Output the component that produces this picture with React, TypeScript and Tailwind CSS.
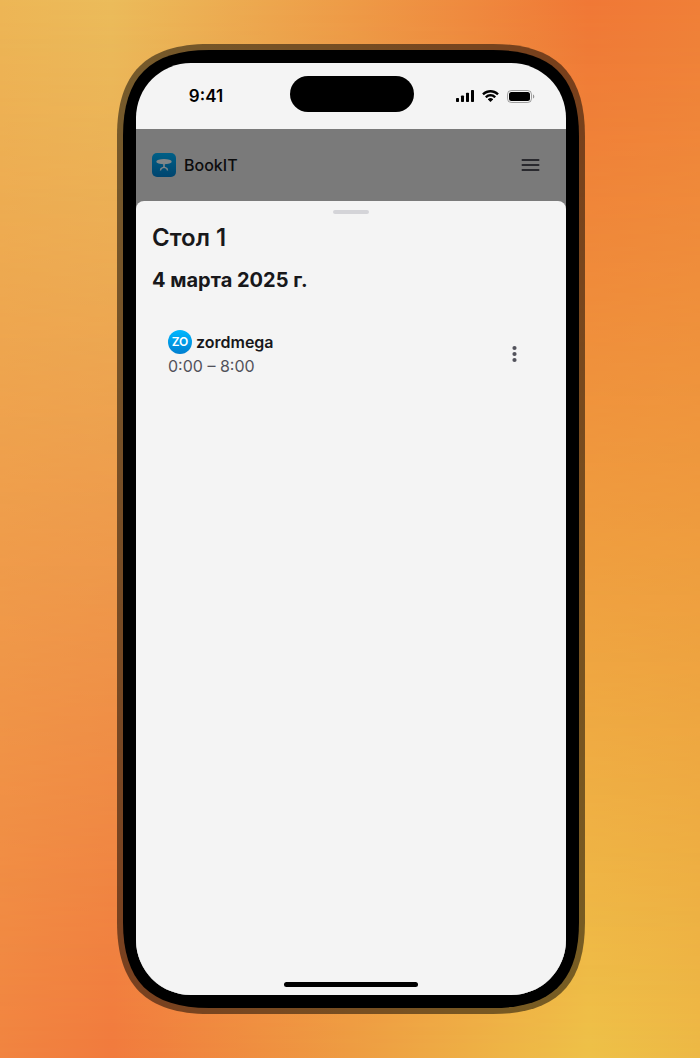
import React from "react";

function Backdrop() {
  return (
    <div aria-hidden="true" className="absolute inset-0 bg-[linear-gradient(90deg,#edb656_0%,#ebbc5b_16%,#ee9b47_50%,#f07836_84%,#f07f38_100%)]">
      <div className="h-full w-full bg-[linear-gradient(90deg,#f18440_0%,#f17a3d_16%,#ee9c42_50%,#eec148_84%,#edb945_100%)] [mask-image:linear-gradient(to_bottom,transparent,black)]" />
    </div>
  );
}

function Bezel() {
  return (
    <svg aria-hidden="true" className="absolute inset-0 h-full w-full" viewBox="0 0 468 970" preserveAspectRatio="none">
      <path
        fill="#000"
        fillOpacity=".5"
        d="M0 92C0 29 29 0 92 0H376C439 0 468 29 468 92V878C468 941 439 970 376 970H92C29 970 0 941 0 878Z"
      />
      <path
        fill="#000"
        d="M6 92C6 33 33 6 92 6H376C435 6 462 33 462 92V878C462 937 435 964 376 964H92C33 964 6 937 6 878Z"
      />
    </svg>
  );
}

function StatusIcons() {
  return (
    <div className="flex items-center gap-2">
      <svg aria-hidden="true" width="18" height="12" viewBox="0 0 18 12">
        <rect x="0" y="8" width="3" height="4" rx=".8" />
        <rect x="5" y="5.5" width="3" height="6.5" rx=".8" />
        <rect x="10" y="2.8" width="3" height="9.2" rx=".8" />
        <rect x="15" y="0" width="3" height="12" rx=".8" />
      </svg>
      <svg aria-hidden="true" width="17" height="12" viewBox="0 0 17 12">
        <path d="M8.5 2.5c2.4 0 4.7.9 6.4 2.6.1.1.3.1.5 0l1.2-1.3c.2-.1.2-.4 0-.5C12-1 5-1 .4 3.3c-.2.1-.2.4 0 .5l1.2 1.3c.2.1.4.1.5 0 1.7-1.7 4-2.6 6.4-2.6Z" />
        <path d="M8.5 6.6c1.3 0 2.6.5 3.5 1.4.2.1.4.1.5 0l1.3-1.3c.1-.2.1-.4 0-.5a7.7 7.7 0 0 0-10.6 0c-.1.1-.1.3 0 .5L4.5 8c.1.1.3.1.5 0 .9-.9 2.2-1.4 3.5-1.4Z" />
        <path d="M11 9.5c.1-.2.1-.4 0-.5a3.900 3.900 0 0 0-5 0c-.1.1-.1.3 0 .5l2.2 2.3c.2.2.4.2.6 0Z" />
      </svg>
      <svg aria-hidden="true" width="28" height="13" viewBox="0 0 28 13">
        <rect x=".5" y=".5" width="24" height="12" rx="3.8" fill="none" stroke="#000" strokeOpacity=".35" />
        <path d="M26 4.5v4.1c.8-.3 1.3-1.1 1.3-2s-.5-1.7-1.3-2.1Z" fillOpacity=".4" />
        <rect x="2" y="2" width="21" height="9" rx="2.5" />
      </svg>
    </div>
  );
}

function StatusBar() {
  return (
    <div className="grid h-[66px] grid-cols-[1fr_124px_1fr] items-center pl-0.5 text-black">
      <time className="pr-4 text-center text-[17px] leading-6 font-semibold">9:41</time>
      <div className="mb-1 h-9 rounded-full bg-black" />
      <div className="flex justify-end pr-[31px]">
        <StatusIcons />
      </div>
    </div>
  );
}

function AppLogo() {
  return (
    <svg aria-hidden="true" width="24" height="24" viewBox="0 0 24 24">
      <defs>
        <linearGradient id="logo" x1="0" y1="0" x2="0" y2="1">
          <stop offset="0" stopColor="#005f86" />
          <stop offset="1" stopColor="#00456f" />
        </linearGradient>
      </defs>
      <rect width="24" height="24" rx="5" fill="url(#logo)" />
      <ellipse cx="12" cy="8.7" rx="7.7" ry="2.6" fill="#818688" />
      <path d="M11.200 10.5h1.600v3.200l2.700 1.300.7 2.600h-1.300l-.8-1.800-2.100-.9-2.100.9-.8 1.800H7.800l.7-2.600 2.700-1.300Z" fill="#818688" />
    </svg>
  );
}

function Header() {
  return (
    <header className="flex h-[72px] items-center justify-between pr-6 pl-4">
      <a href="#" className="flex items-center gap-2 text-base font-medium text-[#0c0c0d]">
        <AppLogo />
        BookIT
      </a>
      <button type="button" aria-label="Меню" className="text-[#29292e]">
        <svg width="24" height="24" viewBox="0 0 24 24" fill="none" stroke="currentColor" strokeWidth="2" strokeLinecap="round">
          <path d="M4.500 7h16M4.500 12h16M4.500 17h16" />
        </svg>
      </button>
    </header>
  );
}

function Booking({ name, time }: { name: string; time: string }) {
  return (
    <li className="flex items-center justify-between p-4">
      <div>
        <div className="flex items-center gap-1">
          <span className="flex size-6 items-center justify-center rounded-full bg-linear-to-b from-[#00b8ff] to-[#007fd0] text-xs font-semibold text-white">
            {name.slice(0, 2).toUpperCase()}
          </span>
          <span className="text-base font-semibold">{name}</span>
        </div>
        <p className="text-base text-[#52525b]">{time}</p>
      </div>
      <button type="button" aria-label="Действия" className="flex size-10 items-center justify-center text-[#52525b]">
        <svg width="24" height="24" viewBox="0 0 24 24" fill="currentColor">
          <circle cx="12.5" cy="6" r="2.1" />
          <circle cx="12.5" cy="12" r="2.1" />
          <circle cx="12.5" cy="18" r="2.1" />
        </svg>
      </button>
    </li>
  );
}

function Sheet() {
  return (
    <section className="flex grow flex-col rounded-t-lg bg-[#f4f4f4] px-4 pt-2 text-[#18181b]">
      <div className="mt-px h-1 w-9 self-center rounded-full bg-[#d4d4d8]" />
      <h1 className="mt-2 text-2xl leading-8 font-semibold">Стол 1</h1>
      <h2 className="mt-3 text-xl leading-7 font-bold">4 марта 2025 г.</h2>
      <ul className="mt-5">
        <Booking name="zordmega" time="0:00 – 8:00" />
      </ul>
      <div className="mt-auto mb-2 h-[5px] w-[134px] self-center rounded-full bg-black" />
    </section>
  );
}

export default function App() {
  return (
    <div className="relative flex min-h-screen items-center justify-center py-11 pl-0.5 font-['Inter',sans-serif]">
      <Backdrop />
      <div className="relative flex w-full max-w-[468px] p-[19px]">
        <Bezel />
        <main className="relative flex min-h-[932px] w-full flex-col overflow-hidden rounded-[55px] bg-[#f4f4f4]">
          <StatusBar />
          <div className="flex grow flex-col bg-[#7a7a7a]">
            <Header />
            <Sheet />
          </div>
        </main>
      </div>
    </div>
  );
}
